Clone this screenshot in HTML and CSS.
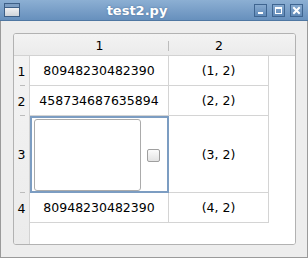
FILE: index.html
```html
<!DOCTYPE html>
<html lang="en">
<head>
  <meta charset="UTF-8">
  <meta name="viewport" content="width=device-width, initial-scale=1.0">
  <link rel="stylesheet" href="styles.css">
  <title>test2.py</title>
</head>
<body>

  <div class="window">
    <div class="titlebar">
      <div class="win-icon"><div class="win-icon-bar"></div></div>
      <div class="title">test2.py</div>
      <div class="buttons">
        <div class="wbtn"><div class="glyph-min"></div></div>
        <div class="wbtn"><div class="glyph-max"></div></div>
        <div class="wbtn">
          <svg width="11" height="11" viewBox="0 0 11 11">
            <path d="M3 3 L8 8 M8 3 L3 8" stroke="#fff" stroke-width="2" stroke-linecap="square"/>
          </svg>
        </div>
      </div>
    </div>

    <div class="client">
      <div class="table-frame">
        <div class="corner"></div>
        <div class="hheader">
          <div class="hsec col1">1</div>
          <div class="hsec col2">2</div>
        </div>
        <div class="vheader">
          <div class="vsec r-norm">1</div>
          <div class="vsec r-norm">2</div>
          <div class="vsec r-tall">3</div>
          <div class="vsec r-norm last">4</div>
        </div>
        <div class="viewport">
          <div class="grid">
            <div class="cell col1 r-norm">80948230482390</div>
            <div class="cell col2 r-norm">(1, 2)</div>
            <div class="cell col1 r-norm">458734687635894</div>
            <div class="cell col2 r-norm">(2, 2)</div>
            <div class="cell col1 r-tall editor">
              <div class="textedit"></div>
              <div class="checkbox"></div>
            </div>
            <div class="cell col2 r-tall">(3, 2)</div>
            <div class="cell col1 r-norm">80948230482390</div>
            <div class="cell col2 r-norm">(4, 2)</div>
          </div>
        </div>
      </div>
    </div>
  </div>

</body>
</html>
```

FILE: styles.css
```css
body {
  margin: 0;
  font-family: "DejaVu Sans", sans-serif;
  font-size: 12.5px;
  color: #000;
  background-color: #ededed;
}

.window {
  width: 308px;
  height: 258px;
  box-sizing: border-box;
  display: flex;
  flex-direction: column;
  border: 1px solid #9a9a9a;
  border-top: none;
  background-color: #ededed;
}

/* title bar */
.titlebar {
  height: 21px;
  flex: none;
  display: flex;
  align-items: center;
  box-sizing: border-box;
  padding: 0 5px 0 4px;
  margin: 0 -1px;
  background: linear-gradient(#8cafd3, #6790bd);
  border-bottom: 1px solid #4f77a2;
}

.win-icon {
  width: 16px;
  height: 14px;
  box-sizing: border-box;
  border: 1px solid #3d5f86;
  background: linear-gradient(#ffffff, #cfd4da);
}

.win-icon-bar {
  height: 3px;
  background: #7d9ec3;
  border-bottom: 1px solid #3d5f86;
}

.title {
  flex: 1;
  text-align: center;
  color: #fff;
  font-weight: bold;
  font-size: 13px;
  text-shadow: 0 0 2px #4a6e96;
}

.buttons {
  display: flex;
  gap: 5px;
}

.wbtn {
  width: 13px;
  height: 13px;
  box-sizing: border-box;
  border: 1px solid #3f6590;
  background: linear-gradient(#86a9cf, #5f89b7);
  display: flex;
  align-items: center;
  justify-content: center;
}

.glyph-min {
  width: 5px;
  height: 2px;
  background: #fff;
  margin-top: 5px;
}

.glyph-max {
  width: 5px;
  height: 4px;
  border: 1px solid #fff;
  border-top-width: 2px;
}

/* client area */
.client {
  flex: 1;
  padding: 12px 11px 12px 12px;
}

.table-frame {
  height: 100%;
  box-sizing: border-box;
  border: 1px solid #b2b2b2;
  border-radius: 3px;
  display: grid;
  grid-template-columns: 16px 1fr;
  grid-template-rows: 22px 1fr;
  background-color: #fff;
  overflow: hidden;
}

.corner,
.hheader,
.vheader {
  background: linear-gradient(#f3f3f3, #ebebeb);
}

.corner {
  border-bottom: 1px solid #d2d2d2;
}

.hheader {
  display: flex;
  border-bottom: 1px solid #d2d2d2;
}

.hsec {
  box-sizing: border-box;
  display: flex;
  align-items: center;
  justify-content: center;
  padding-top: 2px;
  position: relative;
}

.hsec.col1::after {
  content: "";
  position: absolute;
  right: 0;
  top: 7px;
  height: 10px;
  border-right: 1px solid #bcbcbc;
}

.vheader {
  border-right: 1px solid #d2d2d2;
  display: flex;
  flex-direction: column;
}

.vsec {
  box-sizing: border-box;
  display: flex;
  align-items: center;
  justify-content: center;
  position: relative;
}

.vsec::after {
  content: "";
  position: absolute;
  bottom: 0;
  left: 6px;
  width: 5px;
  border-bottom: 1px solid #bcbcbc;
}

.vsec.last::after {
  display: none;
}

.viewport {
  background-color: #fff;
}

.grid {
  display: grid;
  grid-template-columns: 139px 100px;
}

.col1 {
  width: 139px;
}

.col2 {
  width: 100px;
}

.r-norm {
  height: 30px;
}

.r-tall {
  height: 77px;
}

.cell {
  box-sizing: border-box;
  display: flex;
  align-items: center;
  justify-content: center;
  border-right: 1px solid #d4d4d4;
  border-bottom: 1px solid #d4d4d4;
}

/* row 3, column 1 holds the open editor */
.cell.editor {
  border: 2px solid #7c9dc2;
  justify-content: flex-start;
  padding: 1px 2px 0 2px;
  align-items: stretch;
}

.textedit {
  width: 107px;
  box-sizing: border-box;
  border: 1px solid #ababab;
  border-radius: 3px;
  background-color: #fff;
}

.checkbox {
  align-self: center;
  width: 13px;
  height: 13px;
  box-sizing: border-box;
  margin-left: 6px;
  border: 1px solid #9f9f9f;
  border-radius: 2px;
  background: linear-gradient(#fbfbfb, #e3e3e3);
}
```
